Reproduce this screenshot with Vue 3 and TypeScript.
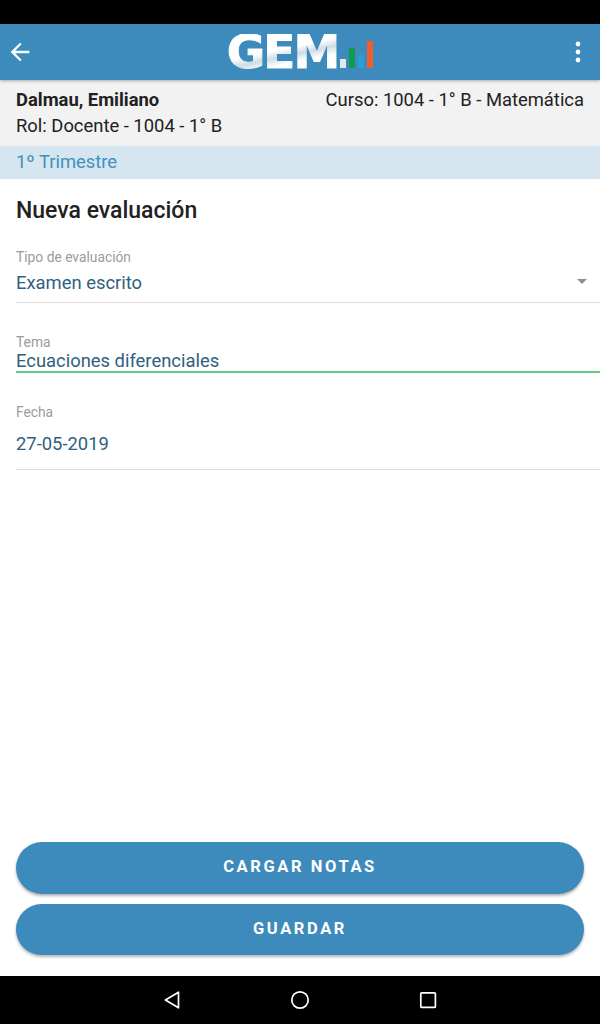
<script setup lang="ts">
import { ref } from 'vue'

const tipo = ref('Examen escrito')
const tema = ref('Ecuaciones diferenciales')
const fecha = ref('27-05-2019')
</script>

<template>
  <div class="screen">
    <div class="status-bar"></div>

    <header class="toolbar">
      <svg class="back" width="28" height="28" viewBox="0 0 24 24">
        <path d="M20 11H7.83l5.59-5.59L12 4l-8 8 8 8 1.41-1.41L7.83 13H20z" fill="#fff" />
      </svg>
      <div class="logo">
        <span class="logo-text">GEM</span>
        <span class="logo-bars">
          <i class="bar bar-white"></i>
          <i class="bar bar-green"></i>
          <i class="bar bar-blue"></i>
          <i class="bar bar-orange"></i>
        </span>
      </div>
      <svg class="more" width="24" height="24" viewBox="0 0 24 24">
        <circle cx="12" cy="4" r="2.4" fill="#fff" />
        <circle cx="12" cy="12" r="2.4" fill="#fff" />
        <circle cx="12" cy="20" r="2.4" fill="#fff" />
      </svg>
    </header>

    <section class="info">
      <div class="info-row">
        <strong>Dalmau, Emiliano</strong>
        <span>Curso: 1004 - 1° B - Matemática</span>
      </div>
      <div>Rol: Docente - 1004 - 1° B</div>
    </section>

    <div class="period">1º Trimestre</div>

    <main class="content">
      <h1>Nueva evaluación</h1>

      <div class="field field-select">
        <label>Tipo de evaluación</label>
        <div class="value">{{ tipo }}</div>
        <span class="caret"></span>
      </div>

      <div class="field field-focus">
        <label>Tema</label>
        <div class="value">{{ tema }}</div>
      </div>

      <div class="field field-date">
        <label>Fecha</label>
        <div class="value">{{ fecha }}</div>
      </div>
    </main>

    <div class="actions">
      <button type="button">CARGAR NOTAS</button>
      <button type="button">GUARDAR</button>
    </div>

    <nav class="nav-bar">
      <svg width="20" height="20" viewBox="0 0 20 20">
        <path d="M16.5 2.2v15.6L3.4 10z" fill="none" stroke="#fff" stroke-width="1.7" stroke-linejoin="round" />
      </svg>
      <svg width="20" height="20" viewBox="0 0 20 20">
        <circle cx="10" cy="10" r="8.2" fill="none" stroke="#fff" stroke-width="1.7" />
      </svg>
      <svg width="20" height="20" viewBox="0 0 20 20">
        <rect x="2.8" y="2.8" width="14.6" height="14.6" rx="1" fill="none" stroke="#fff" stroke-width="1.7" />
      </svg>
    </nav>
  </div>
</template>

<style>
html,
body {
  margin: 0;
  background: #fff;
}
</style>

<style scoped>
.screen {
  width: 600px;
  height: 1024px;
  display: flex;
  flex-direction: column;
  overflow: hidden;
  font-family: Roboto, "Liberation Sans", sans-serif;
  color: #212121;
  background: #fff;
}

.status-bar {
  height: 24px;
  background: #000;
}

.toolbar {
  position: relative;
  z-index: 1;
  height: 56px;
  display: flex;
  align-items: center;
  justify-content: space-between;
  padding: 0 10px 0 6px;
  background: #3d8bbd;
  box-shadow: 0 1px 3px rgba(0, 0, 0, 0.3);
}

.logo {
  display: flex;
  align-items: flex-end;
  gap: 2px;
  height: 36px;
}

.logo-text {
  font-family: "DejaVu Sans", sans-serif;
  font-weight: 700;
  font-size: 47px;
  line-height: 36px;
  letter-spacing: -2px;
  -webkit-text-stroke: 1px transparent;
  background: linear-gradient(168deg, #fff 45%, #cfdde4 58%, #fff 72%);
  -webkit-background-clip: text;
  background-clip: text;
  color: transparent;
}

.logo-bars {
  display: flex;
  align-items: flex-end;
  gap: 3px;
  height: 28px;
  margin-bottom: 2px;
}

.bar {
  display: block;
  width: 6px;
}

.bar-white {
  height: 9px;
  background: #dfe8ec;
}

.bar-green {
  height: 20px;
  background: #0f9a50;
}

.bar-blue {
  height: 13px;
  background: #2a9fd6;
}

.bar-orange {
  height: 27px;
  background: #ee5f2c;
}

.info {
  height: 66px;
  box-sizing: border-box;
  padding: 7px 16px 0;
  background: #f2f2f2;
  font-size: 18.4px;
  line-height: 26px;
}

.info-row {
  display: flex;
  justify-content: space-between;
}

.info-row strong {
  font-weight: 700;
}

.period {
  height: 33px;
  padding-left: 16px;
  background: #d5e6f1;
  color: #4490c0;
  font-size: 18.4px;
  line-height: 32px;
}

.content {
  flex: 1;
  padding-left: 16px;
}

h1 {
  margin: 18px 0 24px;
  font-size: 23px;
  font-weight: 500;
  line-height: 28px;
}

.field {
  position: relative;
  box-sizing: border-box;
  border-bottom: 1px solid #dcdcdc;
}

.field label {
  display: block;
  font-size: 13.8px;
  line-height: 16px;
  color: #9b9b9b;
}

.value {
  font-size: 18.4px;
  line-height: 24px;
  color: #2f5f80;
}

.field-select {
  height: 54px;
}

.field-select .value {
  margin-top: 6px;
}

.caret {
  position: absolute;
  right: 13px;
  top: 30px;
  width: 0;
  height: 0;
  border-left: 5px solid transparent;
  border-right: 5px solid transparent;
  border-top: 5px solid #8f8f8f;
}

.field-focus {
  height: 39px;
  margin-top: 31px;
  border-bottom: 2px solid #5fca80;
}

.field-focus .value {
  margin-top: -1px;
}

.field-date {
  height: 66px;
  margin-top: 31px;
}

.field-date .value {
  margin-top: 12px;
}

.actions {
  display: flex;
  flex-direction: column;
  gap: 10px;
  padding: 0 16px 21px;
}

button {
  height: 51.5px;
  padding: 0 0 2px;
  border: 0;
  border-radius: 26px;
  background: #3d8bbd;
  color: #fff;
  font-family: Roboto, "Liberation Sans", sans-serif;
  font-size: 16.5px;
  font-weight: 700;
  letter-spacing: 2.6px;
  box-shadow: 0 2px 3px rgba(0, 0, 0, 0.3);
}

.nav-bar {
  height: 48px;
  display: flex;
  align-items: center;
  justify-content: center;
  gap: 108px;
  background: #000;
}
</style>
